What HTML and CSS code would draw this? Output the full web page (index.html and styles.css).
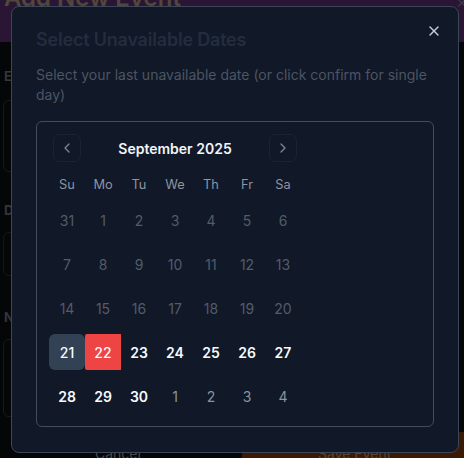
FILE: index.html
```html
<!DOCTYPE html>
<html>
<head>
<meta charset="utf-8">
<link rel="stylesheet" href="styles.css">
</head>
<body>
<div class="page">
  <div class="topbar">
    <h1 class="page-title">Add New Event</h1>
    <span class="page-close">✕</span>
  </div>
  <div class="form">
    <div class="label l1">E</div>
    <div class="field f1"></div>
    <div class="label l2">D</div>
    <div class="field f2"></div>
    <div class="label l3">N</div>
    <div class="field f3"></div>
  </div>
  <div class="footer">
    <div class="btn-cancel">Cancel</div>
    <div class="btn-save">Save Event</div>
  </div>
</div>

<div class="modal">
  <button class="close" aria-label="Close">
    <svg width="16" height="16" viewBox="0 0 24 24" fill="none" stroke="currentColor" stroke-width="2" stroke-linecap="round" stroke-linejoin="round"><path d="M18 6 6 18"/><path d="m6 6 12 12"/></svg>
  </button>
  <h2 class="title">Select Unavailable Dates</h2>
  <p class="desc">Select your last unavailable date (or click confirm for single day)</p>
  <div class="calendar">
    <div class="month">
      <div class="caption">
        <button class="nav prev"><svg width="16" height="16" viewBox="0 0 24 24" fill="none" stroke="currentColor" stroke-width="2" stroke-linecap="round" stroke-linejoin="round"><path d="m15 18-6-6 6-6"/></svg></button>
        <span class="caption-label">September 2025</span>
        <button class="nav next"><svg width="16" height="16" viewBox="0 0 24 24" fill="none" stroke="currentColor" stroke-width="2" stroke-linecap="round" stroke-linejoin="round"><path d="m9 18 6-6-6-6"/></svg></button>
      </div>
      <div class="head-row">
        <span>Su</span><span>Mo</span><span>Tu</span><span>We</span><span>Th</span><span>Fr</span><span>Sa</span>
      </div>
      <div class="row">
        <span class="day past">31</span><span class="day past">1</span><span class="day past">2</span><span class="day past">3</span><span class="day past">4</span><span class="day past">5</span><span class="day past">6</span>
      </div>
      <div class="row">
        <span class="day past">7</span><span class="day past">8</span><span class="day past">9</span><span class="day past">10</span><span class="day past">11</span><span class="day past">12</span><span class="day past">13</span>
      </div>
      <div class="row">
        <span class="day past">14</span><span class="day past">15</span><span class="day past">16</span><span class="day past">17</span><span class="day past">18</span><span class="day past">19</span><span class="day past">20</span>
      </div>
      <div class="row">
        <span class="day today">21</span><span class="day selected">22</span><span class="day">23</span><span class="day">24</span><span class="day">25</span><span class="day">26</span><span class="day">27</span>
      </div>
      <div class="row">
        <span class="day">28</span><span class="day">29</span><span class="day">30</span><span class="day outside">1</span><span class="day outside">2</span><span class="day outside">3</span><span class="day outside">4</span>
      </div>
    </div>
  </div>
</div>
</body>
</html>
```

FILE: styles.css
```css
* { box-sizing: border-box; }
html, body {
  margin: 0;
  padding: 0;
  width: 464px;
  height: 458px;
  overflow: hidden;
  background: #040608;
  font-family: Inter, "Noto Sans", sans-serif;
}
.page {
  position: relative;
  width: 464px;
  height: 458px;
  display: flex;
  flex-direction: column;
}
.topbar {
  height: 42px;
  background: #2a1535;
  position: relative;
  overflow: hidden;
}
.page-title {
  margin: 0;
  font-size: 24px;
  font-weight: 600;
  line-height: 24px;
  color: #51473a;
  padding-left: 4px;
  margin-top: -14px;
}
.page-close {
  position: absolute;
  right: -4px;
  top: -6px;
  font-size: 14px;
  color: #3f3a44;
}
.form {
  flex: 1;
  padding: 27px 0 0 3px;
  display: flex;
  flex-direction: column;
}
.label {
  font-size: 13px;
  font-weight: 700;
  color: #34363a;
  line-height: 14px;
  padding-left: 1px;
}
.field {
  border: 1px solid #18191d;
  border-radius: 6px;
  width: 300px;
}
.f1 { height: 72px; margin-top: 17px; }
.l2 { margin-top: 31px; }
.f2 { height: 44px; margin-top: 15px; border-color: #131519; }
.l3 { margin-top: 34px; }
.f3 { height: 78px; margin-top: 15px; }
.footer {
  height: 26px;
  display: flex;
  align-items: flex-start;
}
.btn-cancel {
  width: 242px;
  padding-left: 95px;
  padding-top: 13px;
  font-size: 14px;
  color: #4a4a4c;
}
.btn-save {
  flex: 1;
  background: #3a1a05;
  padding-top: 13px;
  padding-left: 76px;
  font-size: 14px;
  color: #57463a;
}

.modal {
  position: absolute;
  left: 11px;
  top: 6px;
  width: 448px;
  height: 447px;
  background: #111827;
  border: 1px solid #3c4658;
  border-radius: 8px;
  padding: 24px;
  display: flex;
  flex-direction: column;
}
.close {
  position: absolute;
  right: 16px;
  top: 16px;
  width: 16px;
  height: 16px;
  padding: 0;
  border: 0;
  background: none;
  color: #c9cdd4;
  display: flex;
}
.title {
  margin: 0;
  font-size: 18px;
  line-height: 18px;
  font-weight: 600;
  letter-spacing: -0.2px;
  color: #232d3e;
}
.desc {
  margin: 16px 0 0;
  font-size: 14px;
  line-height: 20px;
  color: #4b5563;
}
.calendar {
  margin-top: 16px;
  border: 1px solid #414c5e;
  border-radius: 6px;
  padding: 12px;
}
.month {
  width: 252px;
}
.caption {
  position: relative;
  height: 28px;
  display: flex;
  align-items: center;
  justify-content: center;
}
.caption-label {
  font-size: 14px;
  font-weight: 600;
  color: #f1f5f9;
}
.nav {
  position: absolute;
  top: 0;
  width: 28px;
  height: 28px;
  padding: 0;
  border: 1px solid #1a2333;
  border-radius: 6px;
  background: transparent;
  color: #7b8494;
  display: flex;
  align-items: center;
  justify-content: center;
}
.prev { left: 4px; }
.next { right: 4px; }
.head-row {
  margin-top: 13px;
  height: 19px;
  display: flex;
}
.head-row span {
  width: 36px;
  text-align: center;
  font-size: 12.8px;
  line-height: 19px;
  color: #8c95a3;
}
.row {
  margin-top: 8px;
  display: flex;
}
.day {
  width: 36px;
  height: 36px;
  display: flex;
  align-items: center;
  justify-content: center;
  font-size: 14px;
  font-weight: 600;
  color: #f8fafc;
}
.day.past {
  color: #525c6b;
  font-weight: 400;
}
.day.outside {
  color: #8a93a1;
  font-weight: 400;
}
.day.today {
  background: #334155;
  border-radius: 6px;
  font-weight: 500;
}
.day.selected {
  background: #ef4444;
  font-weight: 500;
  border-radius: 2px 0 0 2px;
}
```
